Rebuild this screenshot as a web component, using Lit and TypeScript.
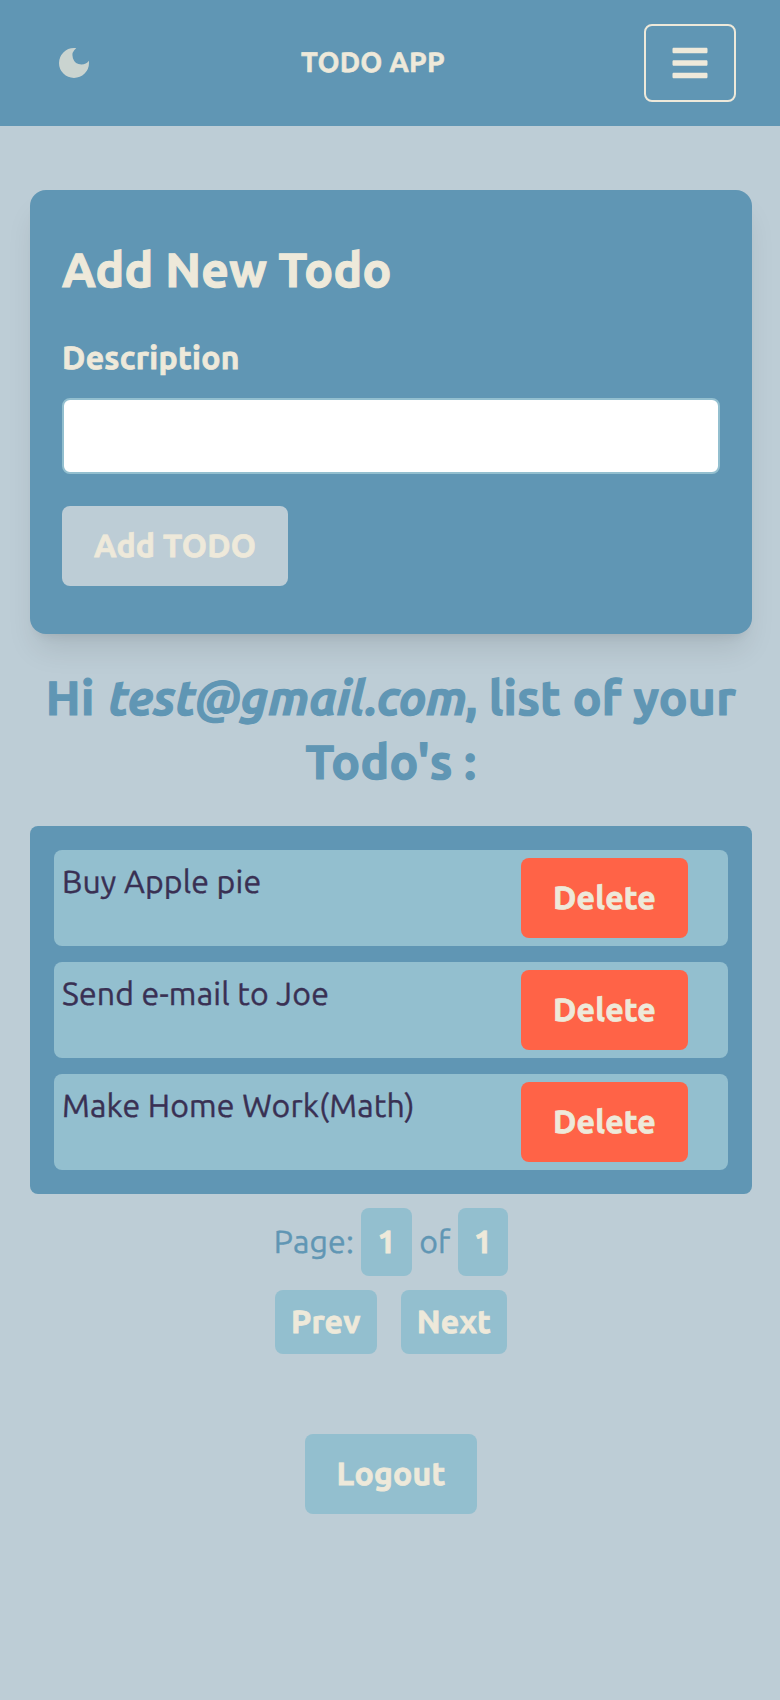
import { LitElement, html, css } from "lit";
import { customElement, state } from "lit/decorators.js";

@customElement("app-root")
class AppRoot extends LitElement {
  static styles = css`
    :host {
      display: block;
      min-height: 1700px;
      background: #bdcdd6;
      color: #393053;
      font: 400 32px/48px "Ubuntu", "Noto Sans", sans-serif;
      letter-spacing: 0.17px;
      text-rendering: geometricPrecision;
      -webkit-text-stroke: 0.4px currentColor;
    }
    * {
      box-sizing: border-box;
    }
    h1, h2, p, ul {
      margin: 0;
      padding: 0;
    }
    button {
      border: 0;
      border-radius: 8px;
      padding: 16px 32px;
      font: inherit;
      font-weight: 700;
      letter-spacing: 0.23px;
      color: #eee9da;
      background: #93bfcf;
      text-rendering: inherit;
      -webkit-text-stroke: 0.8px currentColor;
    }
    .nav {
      height: 126px;
      padding: 0 44px 0 54px;
      display: grid;
      grid-template-columns: 92px 1fr 92px;
      align-items: center;
      background: #6096b4;
      color: #eee9da;
    }
    .moon {
      display: block;
      width: 40px;
      height: 40px;
      fill: #eee9da;
      opacity: 0.75;
    }
    .brand {
      font-size: 28px;
      line-height: 40px;
      font-weight: 700;
      text-align: center;
      padding-right: 44px;
      -webkit-text-stroke: 0.6px currentColor;
    }
    .menu {
      width: 92px;
      height: 78px;
      padding: 0;
      display: grid;
      place-items: center;
      background: none;
      border: 2px solid #eee9da;
    }
    .bars {
      width: 36px;
      height: 40px;
      fill: currentColor;
    }
    .main {
      padding: 64px 28px 0 30px;
      display: flex;
      flex-direction: column;
    }
    .card {
      height: 444px;
      padding: 48px 32px;
      border-radius: 16px;
      background: #6096b4;
      color: #eee9da;
      box-shadow: 0 20px 30px -6px rgb(0 0 0 / 0.1), 0 8px 12px -8px rgb(0 0 0 / 0.1);
    }
    .title {
      font-size: 48px;
      line-height: 64px;
      font-weight: 700;
      letter-spacing: 0.25px;
      -webkit-text-stroke: 1.2px currentColor;
    }
    .label {
      display: block;
      margin: 32px 0 16px;
      font-weight: 700;
      letter-spacing: 0.3px;
      -webkit-text-stroke: 0.8px currentColor;
    }
    .field {
      display: block;
      width: 100%;
      height: 76px;
      margin-bottom: 32px;
      padding: 12px 24px;
      border: 2px solid #93bfcf;
      border-radius: 8px;
      background: #fff;
      font: inherit;
    }
    .add {
      background: #bdcdd6;
    }
    .greeting {
      margin: 32px 0;
      text-align: center;
      color: #6096b4;
    }
    .greeting i {
      margin-left: 2.5px;
      margin-right: -1.5px;
      letter-spacing: -0.25px;
    }
    .list {
      list-style: none;
      padding: 24px;
      border-radius: 8px;
      background: #6096b4;
      display: flex;
      flex-direction: column;
      gap: 16px;
    }
    .item {
      display: flex;
      justify-content: space-between;
      padding: 8px 40px 8px 8px;
      border-radius: 8px;
      background: #93bfcf;
    }
    .item .delete {
      background: #ff6347;
    }
    .pages {
      margin: 24px 0;
      text-align: center;
      color: #6096b4;
    }
    .num {
      padding: 16px;
      border-radius: 8px;
      font-weight: 700;
      background: #93bfcf;
      color: #eee9da;
      -webkit-text-stroke: 0.8px currentColor;
    }
    .pager {
      display: flex;
      justify-content: center;
      gap: 24px;
      margin-bottom: 80px;
    }
    .pager button {
      padding: 8px 16px;
    }
    .logout {
      align-self: center;
    }
  `;

  @state() private todos = ["Buy Apple pie", "Send e-mail to Joe", "Make Home Work(Math)"];

  render() {
    return html`
      <nav class="nav">
        <svg class="moon" viewBox="0 0 24 24">
          <path d="M12 3a9 9 0 1 0 9 9c0-.46-.04-.92-.1-1.36a5.389 5.389 0 0 1-4.4 2.26 5.403 5.403 0 0 1-3.14-9.8c-.44-.06-.9-.1-1.36-.1z" />
        </svg>
        <span class="brand">TODO APP</span>
        <button class="menu" aria-label="Menu">
          <svg class="bars" viewBox="0 0 448 512">
            <path d="M16 132h416c8.837 0 16-7.163 16-16V76c0-8.837-7.163-16-16-16H16C7.163 60 0 67.163 0 76v40c0 8.837 7.163 16 16 16zm0 160h416c8.837 0 16-7.163 16-16v-40c0-8.837-7.163-16-16-16H16c-8.837 0-16 7.163-16 16v40c0 8.837 7.163 16 16 16zm0 160h416c8.837 0 16-7.163 16-16v-40c0-8.837-7.163-16-16-16H16c-8.837 0-16 7.163-16 16v40c0 8.837 7.163 16 16 16z" />
          </svg>
        </button>
      </nav>
      <main class="main">
        <section class="card">
          <h1 class="title">Add New Todo</h1>
          <label class="label" for="description">Description</label>
          <input class="field" id="description" type="text" />
          <button class="add">Add TODO</button>
        </section>
        <h2 class="title greeting">Hi <i>test@gmail.com</i>, list of your Todo's :</h2>
        <ul class="list">
          ${this.todos.map((t) => html`<li class="item"><span>${t}</span><button class="delete">Delete</button></li>`)}
        </ul>
        <p class="pages">Page: <span class="num">1</span> of <span class="num">1</span></p>
        <div class="pager"><button>Prev</button><button>Next</button></div>
        <button class="logout">Logout</button>
      </main>
    `;
  }
}
